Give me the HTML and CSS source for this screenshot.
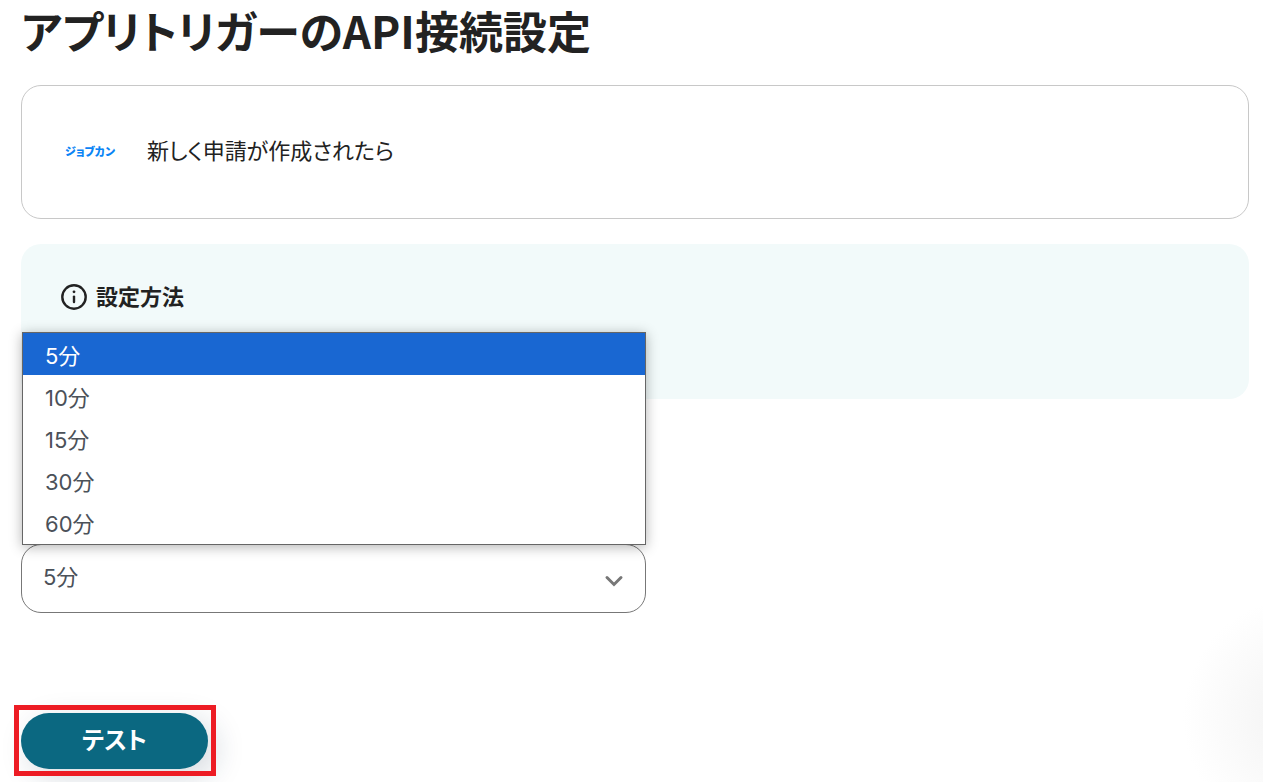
FILE: index.html
```html
<!DOCTYPE html>
<html lang="ja">
<head>
<meta charset="utf-8">
<meta name="viewport" content="width=device-width, initial-scale=1">
<title>アプリトリガーのAPI接続設定</title>
<link rel="stylesheet" href="styles.css">
</head>
<body>
<main class="page">
  <h1 class="title">アプリトリガーのAPI接続設定</h1>
  <section class="trigger">
    <span class="logo">ジョブカン</span>
    <span class="trigger-name">新しく申請が作成されたら</span>
  </section>
  <section class="guide">
    <h2 class="guide-title">
      <svg class="info" viewBox="0 0 26 26" aria-hidden="true">
        <circle cx="13" cy="13" r="11.7" fill="none" stroke="currentColor" stroke-width="2.4"/>
        <path d="M13 12.6v5.4" stroke="currentColor" stroke-width="2.4" stroke-linecap="round"/>
        <circle cx="13" cy="7.8" r="1.4" fill="currentColor"/>
      </svg>
      <span class="guide-label">設定方法</span>
    </h2>
  </section>
  <form class="form">
    <div class="field">
      <select class="select" aria-label="起動間隔">
        <option>5分</option>
        <option>10分</option>
        <option>15分</option>
        <option>30分</option>
        <option>60分</option>
      </select>
      <svg class="chevron" viewBox="0 0 20 14" aria-hidden="true">
        <path d="M3 3.5l7 7 7-7" fill="none" stroke="currentColor" stroke-width="3" stroke-linecap="round"/>
      </svg>
      <ul class="menu" role="listbox" aria-label="起動間隔">
        <li class="menu-item is-selected" role="option" aria-selected="true">5分</li>
        <li class="menu-item" role="option">10分</li>
        <li class="menu-item" role="option">15分</li>
        <li class="menu-item" role="option">30分</li>
        <li class="menu-item" role="option">60分</li>
      </ul>
    </div>
    <button class="test" type="button">テスト</button>
  </form>
</main>
<div class="glow"></div>
</body>
</html>
```
FILE: styles.css
```css
* {
  box-sizing: border-box;
}

body {
  margin: 0;
  background: #fff;
  color: #222;
  font-family: "Noto Sans CJK JP", sans-serif;
  font-size: 22px;
  font-feature-settings: "palt";
}

.page {
  padding: 0 14px 13px 21px;
}

.title {
  margin: 0 0 25px;
  font-size: 44px;
  line-height: 60px;
  font-weight: 700;
}

.trigger {
  display: flex;
  align-items: center;
  gap: 32px;
  height: 134px;
  padding: 0 43px;
  border: 1px solid #c8c8c8;
  border-radius: 20px;
}

.logo {
  padding-bottom: 2px;
  color: #0a84f5;
  font-size: 11px;
  font-weight: 900;
}

.trigger-name {
  padding-bottom: 6px;
}

.guide {
  min-height: 155px;
  margin-top: 25px;
  padding: 37px 40px;
  border-radius: 20px;
  background: #f2fafa;
}

.guide-title {
  display: flex;
  align-items: center;
  gap: 9px;
  margin: 0;
  font-size: 22px;
  line-height: 28px;
  font-weight: 700;
}

.guide-label {
  padding-bottom: 4px;
}

.info {
  width: 26px;
  height: 26px;
}

.form {
  margin-top: 145px;
}

.field {
  position: relative;
  width: 100%;
  max-width: 625px;
  color: #4b5159;
  font-family: Inter, "Noto Sans CJK JP", sans-serif;
}

.select {
  display: block;
  width: 100%;
  height: 69px;
  padding: 0 21px 4px;
  border: 1px solid #777;
  border-radius: 20px;
  appearance: none;
  background: #fff;
  color: inherit;
  font: inherit;
  font-feature-settings: inherit;
}

.chevron {
  position: absolute;
  right: 22px;
  bottom: 25px;
  width: 20px;
  height: 14px;
  color: #777;
}

.menu {
  position: absolute;
  left: 1px;
  right: 0;
  bottom: 68px;
  margin: 0;
  padding: 0 0 1px;
  border: 1px solid #666;
  background: #fff;
  box-shadow: 0 2px 12px rgba(0, 0, 0, 0.3);
  list-style: none;
}

.menu-item {
  padding: 4px 22px 0;
  line-height: 38px;
}

.is-selected {
  background: #1967d2;
  color: #fff;
}

.test {
  position: relative;
  display: block;
  width: 187px;
  height: 56px;
  margin-top: 100px;
  padding: 0 0 6px;
  border: 0;
  border-radius: 28px;
  background: #0b6881;
  box-shadow: 8px 8px 30px rgba(20, 50, 80, 0.18);
  color: #fff;
  font: inherit;
  font-size: 24px;
  font-weight: 700;
  font-feature-settings: inherit;
}

.test::after {
  content: "";
  position: absolute;
  inset: -8px -8px -7px -7px;
  border: 5px solid #ed1c24;
}

.glow {
  position: fixed;
  right: 0;
  bottom: 0;
  width: 80px;
  height: 190px;
  background: radial-gradient(circle 120px at 120px 125px, #f2f2f2, #fff);
  pointer-events: none;
}
```
